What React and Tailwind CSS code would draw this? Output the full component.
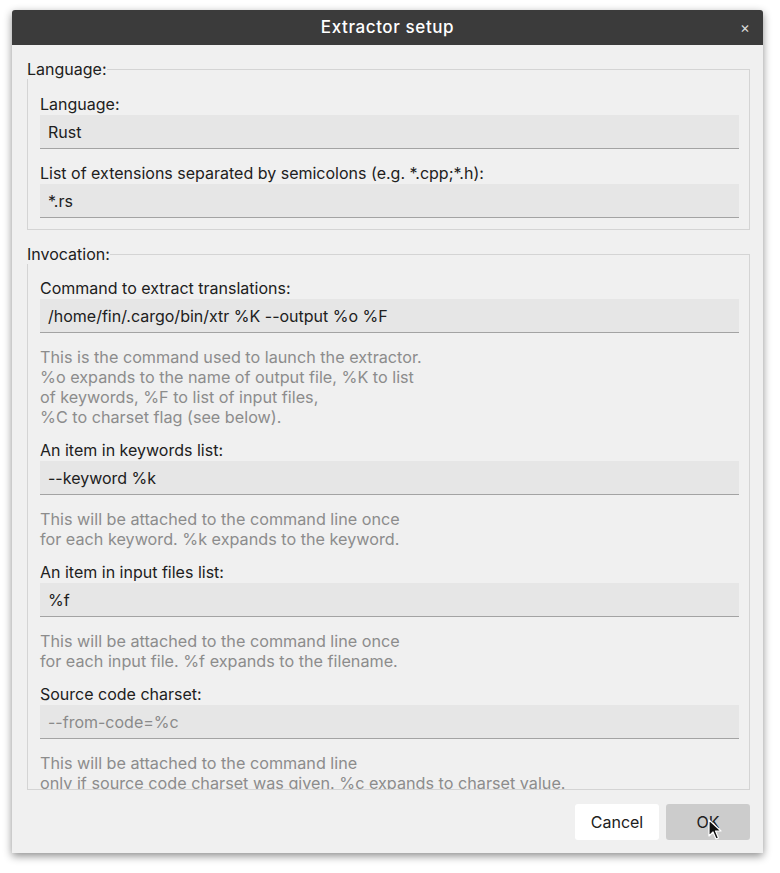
import React from "react";

const Field = ({ label, value, placeholder }) => (
  <div>
    <div className="h-5 leading-5 text-[#202020]">{label}</div>
    <div className="mt-[1px] h-[34px] bg-[#e6e6e6] border-b border-[#a3a3a3] px-2 flex items-center">
      <span className={placeholder ? "text-[#8a8a8a]" : "text-[#202020]"}>{value}</span>
    </div>
  </div>
);

const Help = ({ lines }) => (
  <div className="mt-[14px] text-[#8c8c8c] leading-5 text-[16.2px]">
    {lines.map((l) => (
      <div key={l} className="whitespace-nowrap">{l}</div>
    ))}
  </div>
);

const Cursor = () => (
  <svg
    className="absolute left-[708px] top-[819px] pointer-events-none"
    width="14"
    height="22"
    viewBox="0 0 14 22"
  >
    <path
      d="M1 1 L1 17 L5 13 L8 20 L10.5 19 L7.5 12 L13 12 Z"
      fill="#111"
      stroke="#fff"
      strokeWidth="1.2"
      strokeLinejoin="round"
    />
  </svg>
);

export default function App() {
  return (
    <div
      className="relative w-[780px] h-[873px] bg-white text-[16px]"
      style={{ fontFamily: "Inter, 'Noto Sans', sans-serif" }}
    >
      <div className="absolute left-[12px] top-[10px] w-[751px] h-[843px] bg-[#f0f0f0] rounded-t-[3px] shadow-[0_3px_8px_rgba(0,0,0,0.45)] flex flex-col overflow-hidden">
        {/* title bar */}
        <div className="h-[35px] bg-[#3b3b3b] flex items-center justify-center relative shrink-0">
          <span className="text-white text-[17px] font-medium tracking-[0.6px]">Extractor setup</span>
          <span className="absolute right-[13px] top-[7px] text-[#d8d8d8] text-[15px]">×</span>
        </div>

        {/* scroll area */}
        <div className="h-[746px] overflow-hidden pl-[14px] pr-[13px] pt-[14px] shrink-0">
          <fieldset className="border border-[#d4d4d4] pl-[12px] pr-[10px] pb-[11px] pt-0 ml-[1px]">
            <legend className="px-0 -ml-[13px] h-5 leading-5 text-[#202020]">Language:</legend>
            <div className="pt-[15px]">
              <Field label="Language:" value="Rust" />
            </div>
            <div className="mt-[14px]">
              <Field
                label="List of extensions separated by semicolons (e.g. *.cpp;*.h):"
                value="*.rs"
              />
            </div>
          </fieldset>

          <fieldset className="mt-[14px] border border-[#d4d4d4] pl-[12px] pr-[10px] pt-0 ml-[1px] h-[546px] overflow-hidden">
            <legend className="px-0 -ml-[13px] h-5 leading-5 text-[#202020]">Invocation:</legend>
            <div className="pt-[14px]">
              <Field label="Command to extract translations:" value="/home/fin/.cargo/bin/xtr %K --output %o %F" />
              <Help
                lines={[
                  "This is the command used to launch the extractor.",
                  "%o expands to the name of output file, %K to list",
                  "of keywords, %F to list of input files,",
                  "%C to charset flag (see below).",
                ]}
              />
              <div className="mt-[13px]">
                <Field label="An item in keywords list:" value="--keyword %k" />
              </div>
              <Help
                lines={[
                  "This will be attached to the command line once",
                  "for each keyword. %k expands to the keyword.",
                ]}
              />
              <div className="mt-[13px]">
                <Field label="An item in input files list:" value="%f" />
              </div>
              <Help
                lines={[
                  "This will be attached to the command line once",
                  "for each input file. %f expands to the filename.",
                ]}
              />
              <div className="mt-[13px]">
                <Field label="Source code charset:" value="--from-code=%c" placeholder />
              </div>
              <Help
                lines={[
                  "This will be attached to the command line",
                  "only if source code charset was given. %c expands to charset value.",
                ]}
              />
            </div>
          </fieldset>
        </div>

        {/* buttons */}
        <div className="flex justify-end gap-[7px] pr-[13px] pt-[13px]">
          <button className="w-[84px] h-[36px] bg-white rounded-[3px] text-[#202020]">Cancel</button>
          <button className="w-[84px] h-[36px] bg-[#cccccc] rounded-[3px] text-[#202020]">OK</button>
        </div>
      </div>
      <Cursor />
    </div>
  );
}
